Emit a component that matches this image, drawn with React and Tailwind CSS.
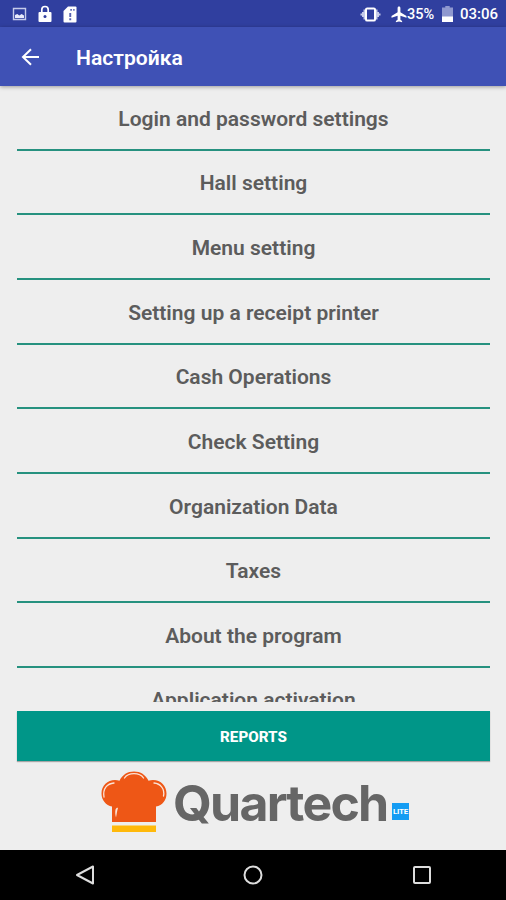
const menuItems = [
  "Login and password settings",
  "Hall setting",
  "Menu setting",
  "Setting up a receipt printer",
  "Cash Operations",
  "Check Setting",
  "Organization Data",
  "Taxes",
  "About the program",
  "Application activation",
];

function StatusBar() {
  return (
    <div className="flex h-[27px] shrink-0 items-center bg-[#303f9f] pl-3 pr-2 pt-px text-white">
      {/* Notifications */}
      <svg className="h-[15px] w-[15px]" viewBox="0 0 15 15">
        <path d="M1.5 1.5h12v11h-12z" fill="none" stroke="#c5cbea" strokeWidth="1.4" />
        <path d="M3 11V8l2.3-1 2 1.5L9.6 7 12 8.5V11z" fill="#e8eafa" />
      </svg>
      <svg className="ml-[11px] h-[18px] w-[14px]" viewBox="0 0 14 18">
        <path d="M3.8 8V4.7a3.2 3.2 0 0 1 6.4 0V8" fill="none" stroke="#fff" strokeWidth="1.7" />
        <rect x=".5" y="7" width="13" height="10" rx="1" fill="#fff" />
        <circle cx="7" cy="11.6" r="1.5" fill="#303f9f" />
      </svg>
      <svg className="ml-[11px] h-[17px] w-[14px]" viewBox="0 0 14 17">
        <path d="M5 .5h7.5a1 1 0 0 1 1 1v14a1 1 0 0 1-1 1h-11a1 1 0 0 1-1-1V5z" fill="#fff" />
        <path d="M7.3 3h1.6v1.8H7.3zM10.2 3h1.4v1.8h-1.4zM6.3 7h1.9v4H6.3zM6.3 12.3h1.9v2H6.3z" fill="#5662b2" />
      </svg>

      {/* System */}
      <svg className="ml-auto h-[15px] w-[21px]" viewBox="0 0 21 15">
        <path d="M5 2.5v10H3.5V10H2V8.5H.5v-2H2V5h1.5V2.5zM16 2.5v10h1.5V10H19V8.5h1.5v-2H19V5h-1.5V2.5z" fill="#c5cbea" />
        <rect x="6" y="1.4" width="9" height="12.2" rx="1.2" fill="#303f9f" stroke="#fff" strokeWidth="2" />
      </svg>
      <svg className="ml-[10px] h-[17px] w-[16px]" viewBox="0 0 16 17">
        <path d="M8 .5c.9 0 1.4.7 1.4 1.5v4.3l6.1 3.8v1.6L9.4 9.8v4l1.7 1.3v1.2L8 15.4l-3.1.9v-1.2l1.7-1.3v-4L.5 11.7v-1.6l6.1-3.8V2c0-.8.5-1.5 1.4-1.5z" fill="#fff" />
      </svg>
      <span className="w-[28px] whitespace-nowrap pt-[2px] text-[14.5px] font-medium leading-none">35%</span>
      <svg className="ml-[7px] h-[16px] w-[11px]" viewBox="0 0 11 16">
        <path d="M3.3 0h4.4v1.5H11V16H0V1.5h3.3z" fill="#8f98cf" />
        <path d="M0 10.5h11V16H0z" fill="#fff" />
      </svg>
      <span className="ml-[7px] w-[38px] whitespace-nowrap pt-px text-[15px] font-medium leading-none">03:06</span>
    </div>
  );
}

function AppBar() {
  return (
    <header className="relative flex h-[59px] shrink-0 items-center bg-[#3f51b5] pl-[21px] pt-[2px] text-white shadow-[0_1px_4px_rgba(0,0,0,0.35)]">
      <svg className="mb-[2px] h-[18px] w-[19px]" viewBox="0 0 19 18">
        <path d="M10 1.3 2 9l8 7.7M2 9h16" fill="none" stroke="#fff" strokeWidth="2" />
      </svg>
      <h1 className="ml-[36px] pt-px text-[21.1px] font-semibold leading-none">Настройка</h1>
    </header>
  );
}

function Logo() {
  return (
    <div className="mt-px flex h-[88px] shrink-0 pl-[101px]">
      <svg className="h-[88px] w-[67px]" viewBox="101 762 67 88">
        <path
          d="M112 822v-15.5c-6-1-10.500-6.500-10.500-13 0-8 6-13.500 13.500-13.500 1.500 0 3 .2 4.500.7 3-6 8-9.200 14.500-9.200s11.500 3.200 14.500 9.200c1.500-.5 3-.7 4.500-.7 8 0 13.500 6 13.500 13.500 0 6.500-4 12-10.500 13V822z"
          fill="#ee5716"
        />
        <g fill="none" stroke="#fbe3d6" strokeWidth="1.3" strokeLinecap="round">
          <path d="M104 797c-1.500-8 3-13.500 10-14" />
          <path d="M124.500 778c2-3 5.500-4.300 9.500-4.300s7.500 1.300 9.500 4.300" />
          <path d="M154 783c6.500.5 11 6 9.500 13" />
        </g>
        <path d="M115.500 809.500c.5-1.500 2-2 2.500-1.500-1 3-1.200 6-2 9.500-.8-2.500-1-5.500-.5-8z" fill="#fbe3d6" />
        <path d="M112 825.500h44v6.500h-44z" fill="#ffb90b" />
      </svg>
      <span className="ml-[5px] mt-[10px] w-[216px] whitespace-nowrap font-['Inter',sans-serif] text-[50px] font-bold leading-[63px] tracking-[-1.75px] text-[#666666]">
        Quartech
      </span>
      <span className="ml-[3px] mt-[41px] flex h-[17px] w-[17px] items-center justify-center bg-[#149cf3] text-[8px] font-bold leading-none tracking-[-0.3px] text-white">
        LITE
      </span>
    </div>
  );
}

function NavBar() {
  return (
    <nav className="flex h-[50px] shrink-0 items-center justify-around bg-black pl-px">
      <svg className="h-5 w-5" viewBox="0 0 20 20">
        <path d="M18 1.5v17L2 10z" fill="none" stroke="#ddd" strokeWidth="2" strokeLinejoin="round" />
      </svg>
      <svg className="h-5 w-5" viewBox="0 0 20 20">
        <circle cx="10" cy="10" r="8.5" fill="none" stroke="#ddd" strokeWidth="2" />
      </svg>
      <svg className="h-5 w-5" viewBox="0 0 20 20">
        <rect x="2" y="2" width="16" height="16" rx="1" fill="none" stroke="#ddd" strokeWidth="2" />
      </svg>
    </nav>
  );
}

export default function App() {
  return (
    <div className="flex h-[900px] w-[506px] flex-col overflow-hidden bg-[#eeeeee] font-['Roboto',sans-serif]">
      <StatusBar />
      <AppBar />

      {/* Settings list */}
      <ul className="ml-[17px] mr-4 h-[616px] shrink-0 overflow-hidden">
        {menuItems.map((item) => (
          <li
            key={item}
            className="flex h-[64.67px] items-center justify-center border-b-2 border-[#26917f] pt-[4px] text-[21px] font-semibold text-[#5c5c5c]"
          >
            {item}
          </li>
        ))}
      </ul>

      <button className="ml-[17px] mr-4 mt-[9px] h-[50px] shrink-0 bg-[#009688] pt-[3px] text-[15.2px] font-extrabold text-white shadow-[0_1px_1px_rgba(0,0,0,0.3)]">
        REPORTS
      </button>

      <Logo />
      <NavBar />
    </div>
  );
}
